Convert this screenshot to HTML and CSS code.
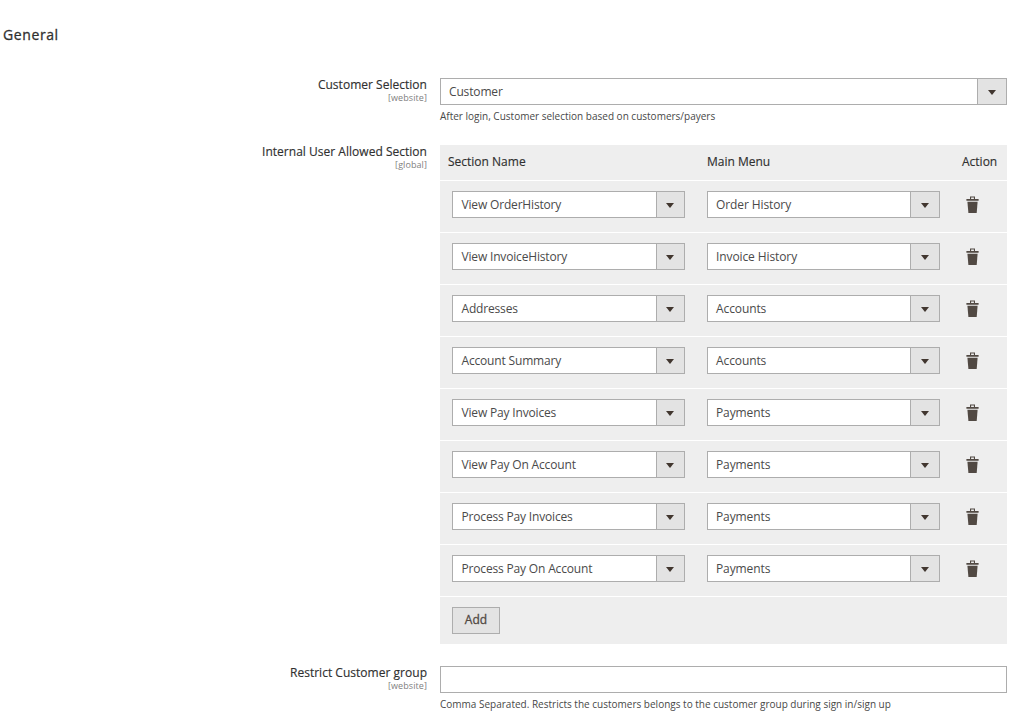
FILE: index.html
```html
<!DOCTYPE html>
<html lang="en">
<head>
<meta charset="utf-8">
<title>General</title>
<link rel="stylesheet" href="styles.css">
</head>
<body>
<svg width="0" height="0" class="defs" aria-hidden="true">
  <symbol id="trash" viewBox="0 0 13 18">
    <path fill-rule="evenodd" d="M4 3V.4h5V3h3.6v1.8H.4V3zm1.1 0h2.8V1.5H5.1z"/>
    <path d="M1.4 5.7h10.2L10.7 17H2.4z"/>
  </symbol>
</svg>
<main class="page">
  <h1 class="title">General</h1>
  <form class="fields">
    <div class="field">
      <div class="label"><span class="name">Customer Selection</span><span class="scope">[website]</span></div>
      <div class="control">
        <div class="select wide"><span class="value">Customer</span><span class="arrow"></span></div>
        <p class="note">After login, Customer selection based on customers/payers</p>
      </div>
    </div>
    <div class="field sections">
      <div class="label"><span class="name">Internal User Allowed Section</span><span class="scope">[global]</span></div>
      <div class="control table">
        <div class="row head"><span>Section Name</span><span>Main Menu</span><span>Action</span></div>
        <div class="row"><div class="select first"><span class="value">View OrderHistory</span><span class="arrow"></span></div><div class="select"><span class="value">Order History</span><span class="arrow"></span></div><svg class="trash"><use href="#trash"/></svg></div>
        <div class="row"><div class="select first"><span class="value">View InvoiceHistory</span><span class="arrow"></span></div><div class="select"><span class="value">Invoice History</span><span class="arrow"></span></div><svg class="trash"><use href="#trash"/></svg></div>
        <div class="row"><div class="select first"><span class="value">Addresses</span><span class="arrow"></span></div><div class="select"><span class="value">Accounts</span><span class="arrow"></span></div><svg class="trash"><use href="#trash"/></svg></div>
        <div class="row"><div class="select first"><span class="value">Account Summary</span><span class="arrow"></span></div><div class="select"><span class="value">Accounts</span><span class="arrow"></span></div><svg class="trash"><use href="#trash"/></svg></div>
        <div class="row"><div class="select first"><span class="value">View Pay Invoices</span><span class="arrow"></span></div><div class="select"><span class="value">Payments</span><span class="arrow"></span></div><svg class="trash"><use href="#trash"/></svg></div>
        <div class="row"><div class="select first"><span class="value">View Pay On Account</span><span class="arrow"></span></div><div class="select"><span class="value">Payments</span><span class="arrow"></span></div><svg class="trash"><use href="#trash"/></svg></div>
        <div class="row"><div class="select first"><span class="value">Process Pay Invoices</span><span class="arrow"></span></div><div class="select"><span class="value">Payments</span><span class="arrow"></span></div><svg class="trash"><use href="#trash"/></svg></div>
        <div class="row"><div class="select first"><span class="value">Process Pay On Account</span><span class="arrow"></span></div><div class="select"><span class="value">Payments</span><span class="arrow"></span></div><svg class="trash"><use href="#trash"/></svg></div>
        <div class="foot"><button type="button" class="add">Add</button></div>
      </div>
    </div>
    <div class="field restrict">
      <div class="label"><span class="name">Restrict Customer group</span><span class="scope">[website]</span></div>
      <div class="control">
        <input class="text" type="text" aria-label="Restrict Customer group">
        <p class="note">Comma Separated. Restricts the customers belongs to the customer group during sign in/sign up</p>
      </div>
    </div>
  </form>
</main>
</body>
</html>
```
FILE: styles.css
```css
* { box-sizing: border-box; }
body { margin: 0; background: #fff; color: #303030; font: 12px/16px "Open Sans", sans-serif; overflow: hidden; }
.defs { position: absolute; }
.page { width: 1036px; height: 718px; padding: 25px 29px 0 0; overflow: hidden; }
.title { margin: 0 0 33px 3px; font-size: 14px; line-height: 20px; font-weight: 400; letter-spacing: .6px; -webkit-text-stroke: .3px #303030; }
.field { display: grid; grid-template-columns: 427px 567px; column-gap: 13px; }
.label { display: flex; flex-direction: column; align-items: flex-end; }
.name { line-height: 14px; letter-spacing: .02px; -webkit-text-stroke: .15px #303030; }
.scope { font-size: 9px; line-height: 12px; letter-spacing: .08px; color: #808080; }
.select { display: flex; width: 233px; height: 27px; border: 1px solid #adadad; background: #fff; }
.value { flex: 1; padding-left: 8px; line-height: 25px; letter-spacing: -.1px; color: #4a4a4a; }
.first .value { padding-left: 8.5px; letter-spacing: -.17px; }
.arrow { display: flex; align-items: center; justify-content: center; width: 29px; padding-top: 2px; border-left: 1px solid #adadad; background: #e3e3e3; }
.arrow::after { content: ""; border: 4px solid transparent; border-top: 5px solid #41362f; border-bottom: 0; }
.first .arrow { width: 28px; padding-right: 1px; }
.select.wide { width: 567px; }
.wide .value { letter-spacing: -.15px; }
.note { margin: 4px 0 0; font-size: 10px; line-height: 14px; color: #484848; white-space: nowrap; }
.sections { margin-top: 22px; }
.table { height: 499px; background: #eee; }
.row { display: grid; grid-template-columns: 233px 233px 13px; column-gap: 22px; height: 52px; padding: 10px 0 0 12px; border-bottom: 1px solid #fff; }
.head { grid-template-columns: 259px 255px 40px; column-gap: 0; height: 36px; padding: 9px 0 0 8px; -webkit-text-stroke: .15px #303030; }
.trash { width: 13px; height: 18px; margin: 5px 0 0 4px; fill: #514943; }
.foot { padding: 10px 12px; }
.add { display: block; width: 48px; height: 27px; padding: 0 0 2px; border: 1px solid #adadad; background: #e3e3e3; color: #514943; font: 12px/22px "Open Sans", sans-serif; -webkit-text-stroke: .3px #514943; }
.restrict { margin-top: 22px; }
.text { display: block; width: 567px; height: 27px; padding: 0 8px; border: 1px solid #adadad; background: #fff; }
```
